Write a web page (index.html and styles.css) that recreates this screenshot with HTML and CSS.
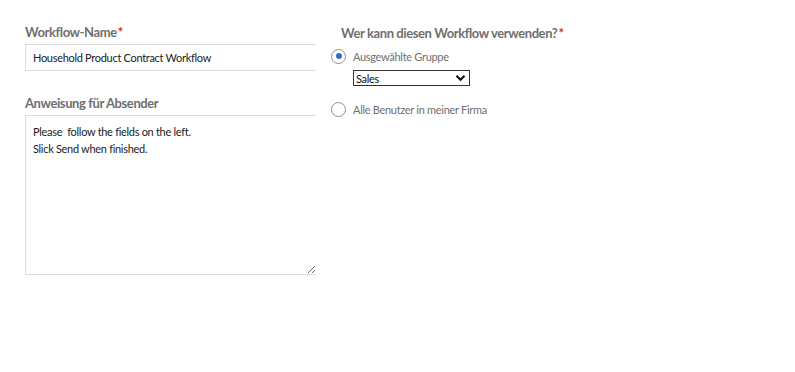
FILE: index.html
```html
<!DOCTYPE html>
<html lang="de">
<head>
    <meta charset="UTF-8">
    <title>Workflow</title>
    <link rel="stylesheet" href="styles.css">
</head>
<body>
    <div class="form">
        <div class="col-left">
            <div class="field">
                <label class="field-label">Workflow-Name<span class="req">*</span></label>
                <input class="text-input" type="text" value="Household Product Contract Workflow">
            </div>
            <div class="field">
                <label class="field-label">Anweisung für Absender</label>
                <textarea class="text-area">Please  follow the fields on the left.
Slick Send when finished.</textarea>
            </div>
        </div>

        <div class="col-right">
            <h3 class="right-title">Wer kann diesen Workflow verwenden?<span class="req">*</span></h3>
            <div class="option">
                <span class="radio checked"></span>
                <span class="option-label">Ausgewählte Gruppe</span>
            </div>
            <div class="select-box">
                <span>Sales</span>
                <svg width="11" height="8" viewBox="0 0 11 8"><path d="M1.5 1.8 L5.5 5.8 L9.5 1.8" fill="none" stroke="#111" stroke-width="2.2"/></svg>
            </div>
            <div class="option option-second">
                <span class="radio"></span>
                <span class="option-label">Alle Benutzer in meiner Firma</span>
            </div>
        </div>
    </div>
</body>
</html>
```

FILE: styles.css
```css
body {
    font-family: Lato, 'Noto Sans', sans-serif;
    margin: 0;
    padding: 0;
    background-color: #fff;
    color: #333;
}

.form {
    display: flex;
    padding: 24px 0 0 25px;
}

.col-left {
    width: 291px;
    overflow: hidden;
}

.field {
    margin-bottom: 24px;
}

.field-label {
    display: block;
    font-size: 13px;
    font-weight: bold;
    letter-spacing: -0.4px;
    color: #6f6f6f;
    margin-bottom: 5px;
    height: 15px;
}

.req {
    color: #e0262a;
    margin-left: 1px;
}

.text-input {
    box-sizing: border-box;
    width: 320px;
    height: 27px;
    border: 1px solid #dcdcdc;
    padding: 0 7px;
    font-family: inherit;
    font-size: 11px;
    letter-spacing: -0.3px;
    color: #222;
    outline: none;
}

.text-area {
    box-sizing: border-box;
    display: block;
    width: 292px;
    height: 160px;
    border: 1px solid #dcdcdc;
    padding: 7px 7px;
    font-family: inherit;
    font-size: 11px;
    letter-spacing: -0.3px;
    line-height: 17px;
    color: #222;
    resize: both;
    outline: none;
}

.col-right {
    margin-left: 15px;
}

.right-title {
    margin: 1px 0 7px 10px;
    font-size: 13px;
    font-weight: bold;
    letter-spacing: -0.4px;
    color: #6f6f6f;
    height: 15px;
}

.option {
    display: flex;
    align-items: center;
    height: 18px;
}

.radio {
    box-sizing: border-box;
    width: 15px;
    height: 15px;
    border: 1px solid #8e8e8e;
    border-radius: 50%;
    margin-right: 7px;
    display: flex;
    align-items: center;
    justify-content: center;
}

.radio.checked::after {
    content: "";
    width: 6px;
    height: 6px;
    border-radius: 50%;
    background-color: #2d6fd0;
}

.option-label {
    font-size: 11px;
    letter-spacing: -0.3px;
    color: #6f6f6f;
}

.select-box {
    box-sizing: border-box;
    margin: 5px 0 0 22px;
    width: 117px;
    height: 16px;
    border: 1px solid #333;
    display: flex;
    align-items: center;
    justify-content: space-between;
    padding: 0 3px 0 2px;
    font-size: 11px;
    letter-spacing: -0.3px;
    color: #111;
}

.option-second {
    margin-top: 14px;
}
```
